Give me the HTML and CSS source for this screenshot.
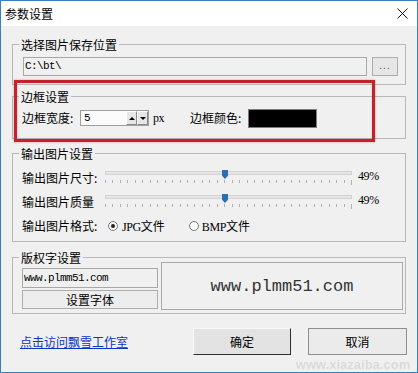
FILE: index.html
```html
<!DOCTYPE html>
<html lang="zh-CN">
<head>
<meta charset="utf-8">
<title>参数设置</title>
<link rel="stylesheet" href="styles.css">
</head>
<body>
<div class="window">
  <div class="titlebar">
    <span class="title">参数设置</span>
    <svg class="close" width="11" height="11" viewBox="0 0 11 11"><path d="M0.5 0.5 L10.5 10.5 M10.5 0.5 L0.5 10.5" stroke="#111" stroke-width="1" fill="none"/></svg>
  </div>
  <div class="content">
    <section class="group g1">
      <div class="legend">选择图片保存位置</div>
      <div class="body b1">
        <div class="textbox path ss">C:\bt\</div>
        <div class="dots-btn">...</div>
      </div>
    </section>

    <section class="group g2">
      <div class="legend">边框设置</div>
      <div class="body b2">
        <span class="lbl w58">边框宽度:</span>
        <div class="spin">
          <span class="spin-val ss">5</span>
          <span class="spin-btns"><span class="sb"><i class="arr up"></i></span><span class="sb"><i class="arr down"></i></span></span>
        </div>
        <span class="unit serif">px</span>
        <span class="lbl w58 color-lbl">边框颜色:</span>
        <div class="swatch"></div>
      </div>
    </section>

    <section class="group g3">
      <div class="legend">输出图片设置</div>
      <div class="body b3">
        <div class="srow">
          <span class="lbl w83">输出图片尺寸:</span>
          <div class="slider">
            <div class="track"></div>
            <div class="thumb"></div>
            <div class="ticks"><i></i><i></i><i></i><i></i><i></i><i></i><i></i><i></i><i></i><i></i><i></i><i></i><i></i><i></i><i></i><i></i><i></i><i></i><i></i><i></i><i></i><i></i><i></i><i></i><i></i><i></i><i></i><i></i><i></i><i></i><i></i><i></i><i></i><i class="end"></i></div>
          </div>
          <span class="pct serif">49%</span>
        </div>
        <div class="srow">
          <span class="lbl w83">输出图片质量</span>
          <div class="slider">
            <div class="track"></div>
            <div class="thumb"></div>
            <div class="ticks"><i></i><i></i><i></i><i></i><i></i><i></i><i></i><i></i><i></i><i></i><i></i><i></i><i></i><i></i><i></i><i></i><i></i><i></i><i></i><i></i><i></i><i></i><i></i><i></i><i></i><i></i><i></i><i></i><i></i><i></i><i></i><i></i><i></i><i class="end"></i></div>
          </div>
          <span class="pct serif">49%</span>
        </div>
        <div class="srow">
          <span class="lbl w86">输出图片格式:</span>
          <span class="radio on"></span>
          <span class="rtext"><span class="serif">JPG</span>文件</span>
          <span class="radio r2"></span>
          <span class="rtext"><span class="serif">BMP</span>文件</span>
        </div>
      </div>
    </section>

    <section class="group g4">
      <div class="legend">版权字设置</div>
      <div class="body b4">
        <div class="leftcol">
          <div class="textbox wm ss">www.plmm51.com</div>
          <div class="font-btn">设置字体</div>
        </div>
        <div class="preview">www.plmm51.com</div>
      </div>
    </section>

    <div class="bottom">
      <a class="link" href="#">点击访问飘雪工作室</a>
      <div class="btn ok">确定</div>
      <div class="btn cancel">取消</div>
    </div>
  </div>

  <div class="highlight"></div>
  <div class="watermark">www.xiazaiba.com</div>
</div>
</body>
</html>
```

FILE: styles.css
```css
* { box-sizing: border-box; }
html, body { margin: 0; padding: 0; background: #ffffff; }
body {
  font-family: "Noto Sans CJK SC", "Noto Sans", sans-serif;
  font-size: 12px;
  color: #000;
}
.ss {
  font-family: "Liberation Mono", "DejaVu Sans Mono", monospace;
  font-size: 11px;
  letter-spacing: -0.6px;
}
.serif {
  font-family: "Liberation Serif", "DejaVu Serif", serif;
  font-size: 12px;
  letter-spacing: -0.4px;
}
.window {
  position: relative;
  width: 418px;
  height: 373px;
  border: 1px solid #3a7fc0;
  background: #f0f0f0;
  overflow: hidden;
}
.titlebar {
  height: 25px;
  background: #ffffff;
  display: flex;
  align-items: center;
  justify-content: space-between;
  padding: 0 9px 0 4px;
}
.title { font-size: 12px; line-height: 14px; }
.close { display: block; }

.content { padding: 18px 11px 0 11px; }

.group {
  border: 1px solid #b8b8b8;
}
.legend {
  width: fit-content;
  margin: -8px 0 0 6px;
  padding: 0 2px;
  font-size: 12px;
  line-height: 15px;
  height: 15px;
  background: #f0f0f0;
  white-space: nowrap;
}
.g2 { margin-top: 11px; }
.g3 { margin-top: 14px; }
.g4 { margin-top: 15px; }

.body { display: flex; }
.b1 { padding: 5px 7px 8px 10px; align-items: flex-start; }
.b2 { padding: 4px 0 10px 9px; align-items: center; height: 34px; }
.b2 > * { flex: none; }
.b3 { padding: 5px 0 3px 9px; flex-direction: column; }
.b4 { padding: 0 2px 3px 9px; align-items: flex-end; }

.textbox {
  border: 1px solid #a8a8a8;
  background: #f0f0f0;
  line-height: 17px;
  white-space: nowrap;
}
.path { flex: 1; height: 19px; padding-left: 1px; }
.dots-btn {
  width: 26px;
  height: 19px;
  margin-left: 5px;
  border: 1px solid #adadad;
  background: #e6e6e6;
  color: #555;
  font-size: 10px;
  line-height: 14px;
  text-align: center;
  letter-spacing: 1px;
}

.lbl { white-space: nowrap; line-height: 16px; }
.w58 { width: 58px; }
.w83 { width: 83px; }
.w86 { width: 86px; }

.spin {
  width: 69px;
  height: 16px;
  border: 1px solid #a0a0a0;
  background: #fbfbfb;
  display: flex;
  align-items: center;
  justify-content: space-between;
  padding: 0 0 0 3px;
}
.spin-val { line-height: 14px; }
.spin-btns { display: flex; height: 14px; }
.sb {
  width: 11px;
  height: 14px;
  border: 1px solid;
  border-color: #ffffff #8a8a8a #8a8a8a #ffffff;
  background: #e6e6e6;
  display: flex;
  align-items: center;
  justify-content: center;
}
.arr { display: block; width: 0; height: 0; border-left: 3px solid transparent; border-right: 3px solid transparent; }
.arr.up { border-bottom: 3px solid #000; }
.arr.down { border-top: 3px solid #000; }

.unit { margin-left: 4px; width: 37px; line-height: 14px; }
.swatch {
  width: 69px;
  height: 19px;
  border: 1px solid #7c7c7c;
  background: #000;
}

.srow { display: flex; align-items: center; height: 24px; flex: none; }
.slider {
  position: relative;
  align-self: stretch;
  width: 247px;
  padding-top: 5px;
  margin-right: 6px;
}
.track {
  height: 4px;
  background: #e4e4e4;
  border: 1px solid #d3d3d3;
}
.thumb {
  position: absolute;
  left: 117px;
  top: 4px;
  width: 6px;
  height: 9px;
  background: #2d6fb5;
  clip-path: polygon(0 0, 100% 0, 100% 65%, 50% 100%, 0 65%);
}
.ticks {
  display: flex;
  justify-content: space-between;
  margin-top: 5px;
  height: 5px;
  align-items: flex-start;
}
.ticks i { display: block; width: 1px; height: 3px; background: #b0b0b0; }
.ticks i.end { height: 5px; }
.pct { margin-bottom: 4px; line-height: 14px; }

.radio {
  width: 10px;
  height: 10px;
  border: 1px solid #7a7a7a;
  border-radius: 50%;
  background: #fff;
  margin-right: 4px;
  display: flex;
  align-items: center;
  justify-content: center;
}
.radio.on::after {
  content: "";
  width: 4px;
  height: 4px;
  border-radius: 50%;
  background: #222;
}
.radio.r2 { margin-left: 24px; margin-right: 3px; }
.rtext { white-space: nowrap; }

.leftcol { width: 136px; display: flex; flex-direction: column; margin-bottom: 1px; }
.wm { height: 20px; padding-left: 1px; line-height: 18px; }
.font-btn {
  margin-top: 2px;
  height: 19px;
  border: 1px solid #adadad;
  background: #ededed;
  text-align: center;
  line-height: 17px;
}
.preview {
  flex: 1;
  margin-left: 3px;
  margin-top: -3px;
  height: 48px;
  border: 1px solid #a8a8a8;
  background: #f0f0f0;
  display: flex;
  align-items: center;
  justify-content: center;
  font-family: "Liberation Mono", monospace;
  font-size: 17px;
  color: #333;
}

.bottom {
  display: flex;
  align-items: center;
  margin-top: 14px;
  margin-right: -1px;
  height: 27px;
}
.link {
  margin-left: 8px;
  color: #0a35c4;
  text-decoration: underline;
  line-height: 16px;
  white-space: nowrap;
}
.btn {
  height: 27px;
  display: flex;
  align-items: center;
  justify-content: center;
}
.ok {
  margin-left: auto;
  width: 98px;
  background: #e3e3e3;
  border: 1px solid;
  border-color: #f8f8f8 #2e2e2e #2e2e2e #f8f8f8;
}
.cancel {
  width: 99px;
  margin-left: 17px;
  background: #ebebeb;
  border: 1px solid #8f8f8f;
}

.highlight {
  position: absolute;
  left: 13px;
  top: 79px;
  width: 361px;
  height: 62px;
  border: 3px solid #c4232a;
  box-shadow: 0 0 2px rgba(196, 35, 42, 0.45), inset 0 0 2px rgba(196, 35, 42, 0.35);
  pointer-events: none;
}
.watermark {
  position: absolute;
  left: 292px;
  top: 357px;
  width: 120px;
  pointer-events: none;
  text-align: center;
  font-family: "Liberation Sans", sans-serif;
  font-weight: bold;
  font-size: 13px;
  line-height: 14px;
  color: rgba(90, 90, 90, 0.16);
}
```
